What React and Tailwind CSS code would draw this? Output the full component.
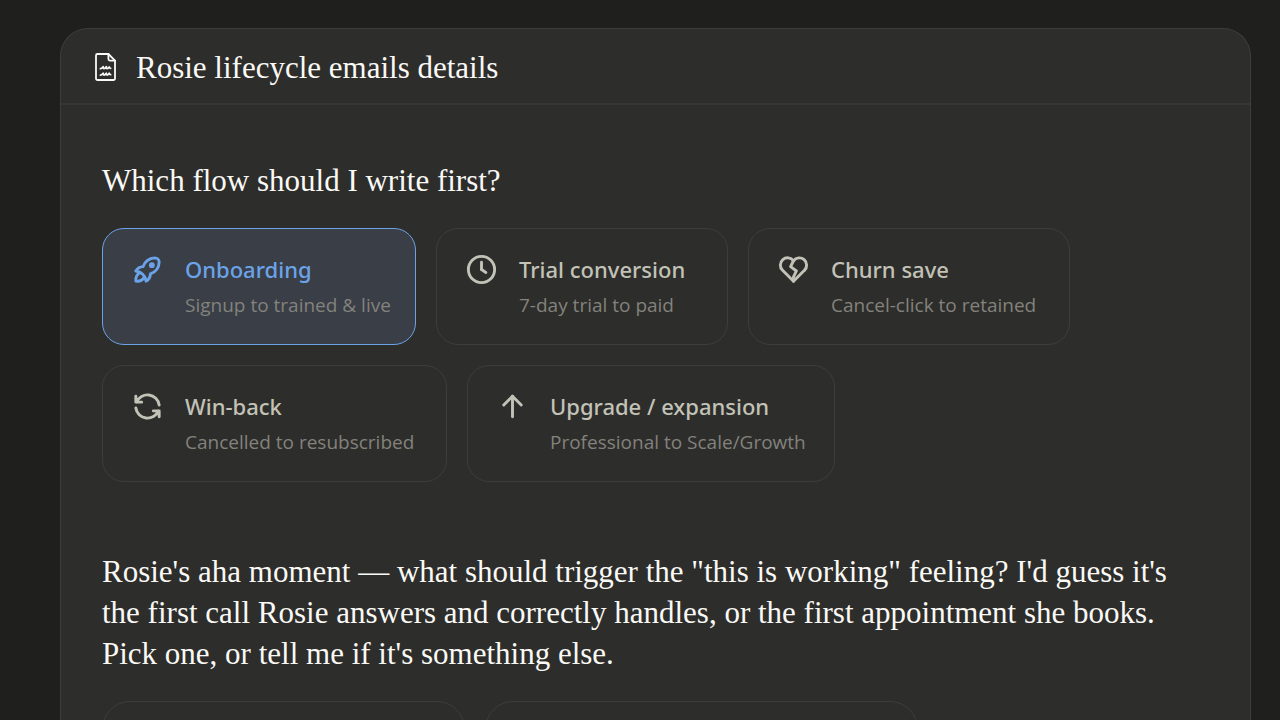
import { useState } from "react";
import {
  TbArrowUp,
  TbClockHour4,
  TbHeartBroken,
  TbRefresh,
  TbRocket,
} from "react-icons/tb";

const flows = [
  {
    id: "onboarding",
    title: "Onboarding",
    subtitle: "Signup to trained & live",
    icon: TbRocket,
    width: "w-[314px]",
  },
  {
    id: "trial",
    title: "Trial conversion",
    subtitle: "7-day trial to paid",
    icon: TbClockHour4,
    width: "w-[292px]",
  },
  {
    id: "churn",
    title: "Churn save",
    subtitle: "Cancel-click to retained",
    icon: TbHeartBroken,
    width: "w-[322px]",
  },
  {
    id: "winback",
    title: "Win-back",
    subtitle: "Cancelled to resubscribed",
    icon: TbRefresh,
    width: "w-[345px]",
  },
  {
    id: "upgrade",
    title: "Upgrade / expansion",
    subtitle: "Professional to Scale/Growth",
    icon: TbArrowUp,
    width: "w-[368px]",
  },
];

function DocumentIcon() {
  return (
    <svg
      width="24"
      height="30"
      viewBox="0 1 24 30"
      fill="none"
      stroke="currentColor"
      strokeWidth="1.8"
      strokeLinecap="round"
      strokeLinejoin="round"
      aria-hidden="true"
      className="shrink-0"
    >
      <path d="M14.4 2H3.500a1.500 1.500 0 0 0-1.500 1.500v23a1.500 1.500 0 0 0 1.500 1.500h16a1.500 1.500 0 0 0 1.500-1.500V8.600z" />
      <path d="M14.400 2v5.100a1.500 1.500 0 0 0 1.500 1.500H21" />
      <path d="M6.400 16.700c1 0 1.900-.9 2.700-1.900.1 1.100.3 1.800.9 1.800s1.600-.8 2.300-1.800c.1 1.100.3 1.800.9 1.800s1.400-.8 2-1.700c.2.900.7 1.400 1.400 1.400" />
      <path d="M6.400 23.100c1 0 1.900-.9 2.700-1.900.1 1.100.3 1.800.9 1.800s1.600-.8 2.300-1.800c.1 1.100.3 1.800.9 1.800s1.400-.8 2-1.700c.2.900.7 1.400 1.400 1.400" />
    </svg>
  );
}

function FlowCard({ flow, selected, onSelect }) {
  const Icon = flow.icon;

  return (
    <button
      type="button"
      aria-pressed={selected}
      onClick={() => onSelect(flow.id)}
      className={`flex items-start gap-5 rounded-[22px] border px-[27px] pt-[23px] pb-[21px] text-left ${flow.width} ${
        selected
          ? "border-[#6ca3e8] bg-[#393e47] text-[#6ca3e8]"
          : "border-[#3d3d3a] text-[#c3c2b7]"
      }`}
    >
      <Icon size={35} className="shrink-0" aria-hidden="true" />
      <span className="whitespace-nowrap">
        <span className="block font-['Noto_Sans',sans-serif] text-[22px] leading-[35px] font-medium">
          {flow.title}
        </span>
        <span className="block text-[19px] leading-[36px] text-[#83827c]">
          {flow.subtitle}
        </span>
      </span>
    </button>
  );
}

function App() {
  const [selected, setSelected] = useState("onboarding");

  return (
    <div className="h-screen overflow-hidden bg-[#1f1f1d] pt-7 pr-[29px] pl-[60px] font-['Open_Sans',sans-serif]">
      <main className="rounded-t-[28px] border border-b-0 border-[#3d3d3b] bg-[#2d2d2b] text-[#faf9f5]">
        <header className="flex items-center gap-[18px] border-b-2 border-[#363634] px-[33px] pt-[19px] pb-[15px]">
          <DocumentIcon />
          <h1 className="font-['Liberation_Serif',serif] text-[31px] leading-10">
            Rosie lifecycle emails details
          </h1>
        </header>

        <div className="px-[41px] pt-[55px]">
          <section>
            <h2 className="font-['Liberation_Serif',serif] text-[31px] leading-[41px]">
              Which flow should I write first?
            </h2>
            <div className="mt-[27px] flex flex-wrap gap-5">
              {flows.map((flow) => (
                <FlowCard
                  key={flow.id}
                  flow={flow}
                  selected={selected === flow.id}
                  onSelect={setSelected}
                />
              ))}
            </div>
          </section>

          <section className="mt-[69px]">
            <p className="pr-6 font-['Liberation_Serif',serif] text-[31px] leading-[41px]">
              Rosie's aha moment — what should trigger the "this is working"
              feeling? I'd guess it's the first call Rosie answers and correctly
              handles, or the first appointment she books. Pick one, or tell me
              if it's something else.
            </p>
            <div className="mt-[27px] flex gap-5">
              <button
                type="button"
                aria-label="First call answered"
                className="h-16 w-[363px] rounded-[28px] border border-[#3d3d3a]"
              />
              <button
                type="button"
                aria-label="First appointment booked"
                className="h-16 w-[433px] rounded-[28px] border border-[#3d3d3a]"
              />
            </div>
          </section>
        </div>
      </main>
    </div>
  );
}

export default App;
